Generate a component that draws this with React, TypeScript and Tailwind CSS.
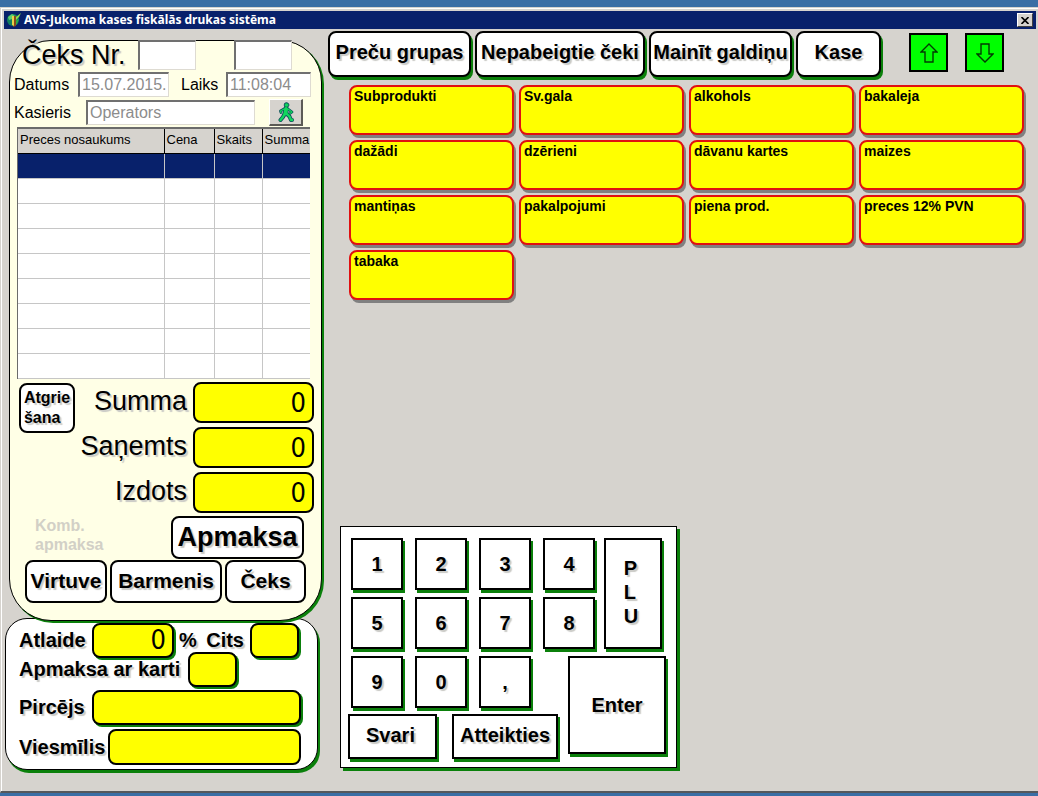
import type { ButtonHTMLAttributes, InputHTMLAttributes } from "react";
import clsx from "clsx";

const groups = [
  "Subprodukti",
  "Sv.gala",
  "alkohols",
  "bakaleja",
  "dažādi",
  "dzērieni",
  "dāvanu kartes",
  "maizes",
  "mantiņas",
  "pakalpojumi",
  "piena prod.",
  "preces 12% PVN",
  "tabaka",
];

const totals = [
  { id: "summa", label: "Summa" },
  { id: "sanemts", label: "Saņemts" },
  { id: "izdots", label: "Izdots" },
];

const topActions = [
  { label: "Preču grupas", width: "w-[143px]" },
  { label: "Nepabeigtie čeki", width: "w-[170px]" },
  { label: "Mainīt galdiņu", width: "w-[143px]" },
  { label: "Kase", width: "w-[85px]" },
];

const textShadow = "[text-shadow:2px_2px_1px_#c9c9c5]";

type ButtonProps = ButtonHTMLAttributes<HTMLButtonElement>;
type InputProps = InputHTMLAttributes<HTMLInputElement>;

function RoundButton({ className, ...props }: ButtonProps) {
  return (
    <button
      type="button"
      className={clsx(
        "flex items-center justify-center whitespace-nowrap rounded-lg border-2 border-black bg-white font-bold",
        textShadow,
        className
      )}
      {...props}
    />
  );
}

function Key({ className, ...props }: ButtonProps) {
  return (
    <button
      type="button"
      className={clsx(
        "flex items-center justify-center border-2 border-black bg-white text-xl font-bold shadow-[2px_3px_0_#0b800b]",
        textShadow,
        className
      )}
      {...props}
    />
  );
}

function SunkenInput({ className, ...props }: InputProps) {
  return (
    <input
      className={clsx(
        "min-w-0 border-t-2 border-r border-b border-l-2 border-t-[#707070] border-l-[#707070] border-r-[#dedbd2] border-b-[#dedbd2] bg-white pl-[2px] text-base text-[#8c8c8c]",
        className
      )}
      {...props}
    />
  );
}

function YellowInput({ className, ...props }: InputProps) {
  return (
    <input
      className={clsx(
        "min-w-0 rounded-lg border-2 border-black bg-[#ffff00] px-[6px] text-right font-['DejaVu_Sans_Condensed','DejaVu_Sans',sans-serif] text-[27px]",
        className
      )}
      {...props}
    />
  );
}

function AppIcon() {
  return (
    <svg viewBox="0 0 16 16" className="size-4">
      <circle cx="7" cy="8" r="6" fill="#13805f" />
      <path d="M2 5l4-3 3 2-3 3-3 1z" fill="#5fd06a" />
      <path d="M9 9l4-2-2 5-3 2z" fill="#2fae4a" />
      <path d="M7 4h3v10l-3 1z" fill="#8a4a1c" />
      <path d="M6 4h2v10l-2-1z" fill="#e8d24a" />
      <path d="M10 5l5-4-2 4-3 3z" fill="#8ee04a" />
    </svg>
  );
}

function WalkerIcon() {
  return (
    <svg viewBox="0 0 16 20" className="h-5 w-4" fill="none" strokeLinecap="round" strokeLinejoin="round">
      <g stroke="#0b4a5a">
        <circle cx="8.5" cy="3" r="2.3" fill="#0b4a5a" strokeWidth="1" />
        <path d="M8 7L7.5 11.5" strokeWidth="5.4" />
        <path d="M6 7L2.5 9L3 10.5M10 7L14 10L12 11.5" strokeWidth="2.8" />
        <path d="M6.5 12L5 15L2.5 18M9 12L11.5 14.5L13 18H14" strokeWidth="4" />
      </g>
      <g stroke="#12d65c">
        <circle cx="8.5" cy="3" r="1.6" fill="#12d65c" strokeWidth="0.6" />
        <path d="M8 7L7.5 11.5" strokeWidth="4" />
        <path d="M6 7L2.5 9L3 10.5M10 7L14 10L12 11.5" strokeWidth="1.4" />
        <path d="M6.5 12L5 15L2.5 18M9 12L11.5 14.5L13 18H14" strokeWidth="2.4" />
      </g>
    </svg>
  );
}

function ArrowIcon({ down }: { down?: boolean }) {
  return (
    <svg viewBox="0 0 18 20" className={clsx("h-5 w-[18px]", down && "rotate-180")} fill="none" stroke="#033a03" strokeWidth="1.4">
      <path d="M9 1L17 9H13V19H5V9H1Z" />
    </svg>
  );
}

function ReceiptPanel() {
  return (
    <section className="relative z-10 ml-[5px] mr-[2px] rounded-[42px] border border-black bg-[#ffffe6] pb-[17px] shadow-[2px_2px_0_#0b800b]">
      <div className="-mt-px flex h-[30px] items-center pl-3">
        <label htmlFor="ceks-nr" className={clsx("w-[116px] text-[27px]", textShadow)}>
          Čeks Nr.
        </label>
        <SunkenInput id="ceks-nr" className="h-[30px] w-[58px]" />
        <SunkenInput aria-label="Čeka sērija" className="ml-[38px] h-[30px] w-[58px]" />
      </div>

      <div className="mt-[2px] flex h-[25px] items-center pr-[10px] pl-1">
        <label htmlFor="datums" className="w-16">
          Datums
        </label>
        <SunkenInput id="datums" defaultValue="15.07.2015." className="h-[25px] w-[91px]" />
        <label htmlFor="laiks" className="ml-3 w-[45px]">
          Laiks
        </label>
        <SunkenInput id="laiks" defaultValue="11:08:04" className="h-[25px] flex-1" />
      </div>

      <div className="mt-[2px] flex h-[27px] items-center pr-[18px] pl-1">
        <label htmlFor="kasieris" className="w-[72px]">
          Kasieris
        </label>
        <SunkenInput id="kasieris" defaultValue="Operators" className="h-[25px] w-[169px]" />
        <button
          type="button"
          aria-label="Mainīt kasieri"
          className="ml-auto flex h-[27px] w-[34px] items-center justify-center border-t border-l border-r-2 border-b-2 border-t-white border-l-white border-r-[#5c5a56] border-b-[#5c5a56] bg-[#d6d3ce]"
        >
          <WalkerIcon />
        </button>
      </div>

      <div className="mt-px ml-[7px] mr-[11px] border-t-2 border-l border-[#6b6b6b] bg-white">
        <table className="w-full table-fixed border-collapse text-[13px]">
          <colgroup>
            <col />
            <col className="w-[50px]" />
            <col className="w-12" />
            <col className="w-12" />
          </colgroup>
          <thead>
            <tr className="h-6 bg-[#d6d3ce]">
              {["Preces nosaukums", "Cena", "Skaits", "Summa"].map(h => (
                <th
                  key={h}
                  className="overflow-hidden border-r border-b border-black pb-[2px] pl-[2px] text-left font-normal whitespace-nowrap last:border-r-0"
                >
                  {h}
                </th>
              ))}
            </tr>
          </thead>
          <tbody>
            {Array.from({ length: 9 }, (_, row) => (
              <tr key={row} className={clsx("h-[25px]", row === 0 && "bg-[#08216b]")}>
                {[0, 1, 2, 3].map(col => (
                  <td key={col} className="border-r border-b border-[#c6c6c6] last:border-r-0" />
                ))}
              </tr>
            ))}
          </tbody>
        </table>
      </div>

      <div className="mt-[3px] flex items-start justify-between pr-[7px] pl-[9px]">
        <RoundButton className="mt-px h-[50px] w-14 text-left text-base leading-5">
          Atgrie
          <br />
          šana
        </RoundButton>
        <div className="flex flex-col gap-1">
          {totals.map(t => (
            <div key={t.id} className="flex items-center justify-end gap-[6px]">
              <label htmlFor={t.id} className={clsx("pb-[2px] text-[27px] leading-8", textShadow)}>
                {t.label}
              </label>
              <YellowInput id={t.id} defaultValue="0" className="h-[41px] w-[121px]" />
            </div>
          ))}
        </div>
      </div>

      <div className="mt-[3px] flex items-start justify-between pr-[17px] pl-[25px]">
        <button type="button" disabled className="text-left text-base leading-[19px] font-bold text-[#d2d0c6]">
          Komb.
          <br />
          apmaksa
        </button>
        <RoundButton className="h-[43px] w-[133px] text-[27px]">Apmaksa</RoundButton>
      </div>

      <div className="mt-px flex gap-[3px] pr-[15px] pl-[15px] text-[21px]">
        <RoundButton className="h-[43px] w-[82px]">Virtuve</RoundButton>
        <RoundButton className="h-[43px] flex-1">Barmenis</RoundButton>
        <RoundButton className="h-[43px] w-[81px]">Čeks</RoundButton>
      </div>
    </section>
  );
}

function CustomerPanel() {
  const label = clsx("text-xl font-bold whitespace-nowrap", textShadow);
  const green = "shadow-[2px_2px_0_#0b800b]";

  return (
    <section className="-mt-[3px] ml-px mr-[6px] rounded-[22px] border border-black bg-white pr-4 pb-1 pl-[13px] shadow-[2px_3px_0_#0b800b]">
      <div className="mt-1 flex items-center">
        <label htmlFor="atlaide" className={clsx(label, "w-[73px]")}>
          Atlaide
        </label>
        <YellowInput id="atlaide" defaultValue="0" className={clsx("h-[35px] w-[82px] px-[2px]", green)} />
        <span className={clsx(label, "ml-[5px]")}>%</span>
        <label htmlFor="cits" className={clsx(label, "ml-auto pr-[6px]")}>
          Cits
        </label>
        <YellowInput id="cits" className={clsx("mr-[2px] h-[35px] w-[49px]", green)} />
      </div>
      <div className="-mt-[6px] flex items-center">
        <label htmlFor="karte" className={clsx(label, "w-[169px]")}>
          Apmaksa ar karti
        </label>
        <YellowInput id="karte" className={clsx("h-[35px] w-[49px]", green)} />
      </div>
      <div className="mt-[3px] flex items-center">
        <label htmlFor="pircejs" className={clsx(label, "w-[73px]")}>
          Pircējs
        </label>
        <YellowInput id="pircejs" className={clsx("h-[35px] flex-1", green)} />
      </div>
      <div className="mt-1 flex items-center">
        <label htmlFor="viesmilis" className={clsx(label, "w-[89px]")}>
          Viesmīlis
        </label>
        <YellowInput id="viesmilis" className="h-9 flex-1" />
      </div>
    </section>
  );
}

function Keypad() {
  return (
    <section className="mt-auto mb-[23px] ml-4 self-start border border-black bg-white pt-[11px] pr-[10px] pb-2 pl-[7px] shadow-[3px_3px_0_#0b800b]">
      <div className="flex gap-[9px] pl-[3px]">
        <div className="grid grid-cols-4 gap-x-3 gap-y-[7px]">
          {["1", "2", "3", "4", "5", "6", "7", "8"].map(n => (
            <Key key={n} className="size-[52px]">
              {n}
            </Key>
          ))}
        </div>
        <Key className="w-[58px] pr-1 pb-1 text-left leading-6">
          P<br />L<br />U
        </Key>
      </div>
      <div className="mt-[7px] flex gap-[10px]">
        <div className="flex flex-col gap-[6px]">
          <div className="flex gap-3 pl-[3px]">
            {["9", "0", ","].map(n => (
              <Key key={n} className="size-[52px]">
                {n}
              </Key>
            ))}
          </div>
          <div className="flex gap-[15px]">
            <Key className="h-[45px] w-[89px] pr-1 pb-1">Svari</Key>
            <Key className="h-[45px] w-[106px] pb-1">Atteikties</Key>
          </div>
        </div>
        <Key className="size-[98px]">Enter</Key>
      </div>
    </section>
  );
}

export default function App() {
  return (
    <div className="flex min-h-screen flex-col bg-[#3a6ea5] pt-[7px] pb-[3px] font-['Liberation_Sans',Arial,sans-serif] text-base text-black">
      <div className="flex flex-1 flex-col border-t border-l border-b-2 border-t-[#d6d3ce] border-l-[#d6d3ce] border-b-[#55585c] bg-[#d6d3ce]">
        <div className="flex flex-1 flex-col border-t border-l border-white pt-[2px] pr-[2px] pl-[2px]">
          <header className="flex h-[18px] items-center bg-[#08216b] pr-[3px] pl-[2px]">
            <AppIcon />
            <h1 className="ml-[2px] font-['Noto_Sans','Open_Sans',sans-serif] text-xs font-bold text-white">
              AVS-Jukoma kases fiskālās drukas sistēma
            </h1>
            <button
              type="button"
              aria-label="Aizvērt"
              className="ml-auto flex h-[14px] w-4 items-center justify-center border border-t-white border-l-white border-r-[#404040] border-b-[#404040] bg-[#d6d3ce]"
            >
              <svg viewBox="0 0 8 7" className="h-[7px] w-2" stroke="#000" strokeWidth="1.6">
                <path d="M0.5 0L7.5 7M7.5 0L0.5 7" />
              </svg>
            </button>
          </header>

          <main className="flex flex-1">
            <div className="w-80 shrink-0 pt-[11px]">
              <ReceiptPanel />
              <CustomerPanel />
            </div>

            <div className="flex flex-1 flex-col">
              <nav className="flex items-start gap-1 pt-[2px] pl-1">
                {topActions.map(a => (
                  <RoundButton key={a.label} className={clsx("h-[46px] pb-1 text-xl shadow-[2px_3px_0_#0b800b]", a.width)}>
                    {a.label}
                  </RoundButton>
                ))}
                <div className="mt-[2px] ml-6 flex gap-[17px]">
                  <button type="button" aria-label="Uz augšu" className="flex size-[39px] items-center justify-center border-2 border-black bg-[#00ff00]">
                    <ArrowIcon />
                  </button>
                  <button type="button" aria-label="Uz leju" className="flex size-[39px] items-center justify-center border-2 border-black bg-[#00ff00]">
                    <ArrowIcon down />
                  </button>
                </div>
              </nav>

              <div className="mt-2 grid grid-cols-4 gap-[5px] pr-3 pl-[25px]">
                {groups.map(g => (
                  <button
                    key={g}
                    type="button"
                    className="flex h-[50px] items-start rounded-lg border-2 border-[#e01010] bg-[#ffff00] pt-px pl-[3px] text-sm leading-4 font-bold shadow-[2px_3px_0_#808080]"
                  >
                    {g}
                  </button>
                ))}
              </div>

              <Keypad />
            </div>
          </main>
        </div>
      </div>
    </div>
  );
}
